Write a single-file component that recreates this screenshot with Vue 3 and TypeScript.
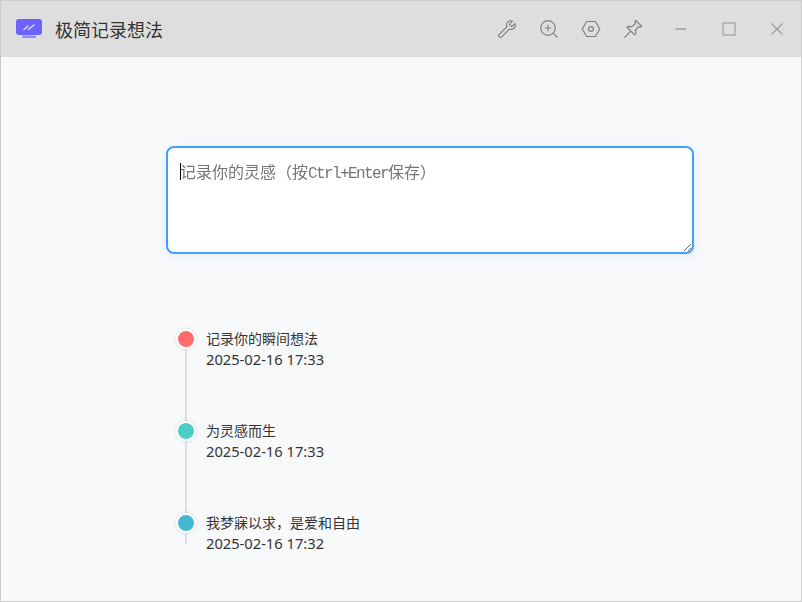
<script setup lang="ts">
import { onMounted, ref } from 'vue'

interface Note {
  text: string
  time: string
  color: string
}

const notes: Note[] = [
  { text: '记录你的瞬间想法', time: '2025-02-16 17:33', color: '#ff6b6b' },
  { text: '为灵感而生', time: '2025-02-16 17:33', color: '#4ecdc4' },
  { text: '我梦寐以求\uFF0C是爱和自由', time: '2025-02-16 17:32', color: '#45b7d1' },
]

const input = ref<HTMLTextAreaElement | null>(null)
onMounted(() => input.value?.focus())
</script>

<template>
  <div class="window">
    <header class="titlebar">
      <div class="brand">
        <svg class="logo" width="28" height="22" viewBox="0 0 28 22">
          <rect x="1" y="1" width="26" height="16" rx="3" fill="#6c63ff" />
          <rect x="7" y="17.500" width="14" height="2.500" rx="1" fill="#8f88ff" />
          <path d="M9 11.500 13 8M13.500 11.500 19 7" stroke="#e4e2ff" stroke-width="1.300" fill="none" stroke-linecap="round" />
        </svg>
        <span class="title">极简记录想法</span>
      </div>
      <div class="tools">
        <svg class="icon" viewBox="0 0 20 20">
          <path d="M18 4.600 14.800 7.600 12.400 5.200 15.400 2.100C12.900 1.100 10.100 2.500 9.600 5C9.400 6 9.500 6.900 9.900 7.700L2.300 15.300C1.500 16.100 1.500 17.200 2.200 17.900 2.900 18.600 4 18.500 4.700 17.800L12.300 10.200C13.200 10.500 14.100 10.600 15 10.400 17.500 9.800 18.900 7.100 18 4.600Z" />
        </svg>
        <svg class="icon" viewBox="0 0 20 20">
          <circle cx="9" cy="9" r="7.300" />
          <path d="M9 5.800V12.200M5.800 9H12.200M14.300 14.300 18.500 18.500" />
        </svg>
        <svg class="icon" viewBox="0 0 20 20">
          <path d="M5.600 2.500H14.400L18.800 10 14.400 17.500H5.600L1.200 10Z" />
          <circle cx="10" cy="10" r="2.400" />
        </svg>
        <svg class="icon" viewBox="0 0 20 20">
          <path d="M12.800 1.500 18.500 7.200 17.300 8 15.500 7.600 12.400 11.300 12.700 15 11.500 15.800 4.200 8.500 5 7.300 8.700 7.600 12.400 4.500 12 2.700ZM7.800 12.200 1.500 18.500" />
        </svg>
      </div>
      <div class="controls">
        <svg class="ctl" viewBox="0 0 14 14"><path d="M1.500 7H12" stroke-width="1.400" /></svg>
        <svg class="ctl" viewBox="0 0 14 14"><rect x="1" y="1" width="12" height="12" /></svg>
        <svg class="ctl" viewBox="0 0 14 14"><path d="M1.500 1.500 12.500 12.500M12.500 1.500 1.500 12.500" /></svg>
      </div>
    </header>

    <main class="content">
      <div class="input-wrap">
        <textarea ref="input" class="note-input" aria-label="记录你的灵感"></textarea>
        <div class="hint"><i class="caret"></i>记录你的灵感&#xFF08;按<span class="latin">Ctrl+Enter</span>保存&#xFF09;</div>
      </div>
      <ul class="timeline">
        <li v-for="(note, i) in notes" :key="i" class="item">
          <span class="dot" :style="{ background: note.color }"></span>
          <div class="text">
            <div class="line1">{{ note.text }}</div>
            <div class="line2">{{ note.time }}</div>
          </div>
        </li>
      </ul>
    </main>
  </div>
</template>

<style>
html, body { margin: 0; padding: 0; }
</style>

<style scoped>
.window {
  width: 802px;
  height: 602px;
  box-sizing: border-box;
  border: 1px solid #ccc;
  background: #f8f9fb;
  display: flex;
  flex-direction: column;
  overflow: hidden;
  font-family: "Noto Sans CJK SC", sans-serif;
}
.titlebar {
  height: 56px;
  flex: none;
  background: #dedede;
  display: flex;
  align-items: center;
  padding: 0 17px 0 14px;
}
.brand {
  display: flex;
  align-items: center;
  gap: 12px;
  flex: 1;
}
.logo { display: block; }
.title {
  font-size: 18px;
  color: #333;
}
.tools {
  display: flex;
  gap: 22px;
  margin-right: 31px;
}
.icon {
  width: 20px;
  height: 20px;
  fill: none;
  stroke: #808080;
  stroke-width: 1.200;
}
.controls {
  display: flex;
  gap: 34px;
  align-items: center;
}
.ctl {
  width: 14px;
  height: 14px;
  fill: none;
  stroke: #9a9a9a;
  stroke-width: 1.100;
}
.content {
  flex: 1;
  padding: 89px 107px 0 165px;
}
.input-wrap { position: relative; }
.note-input {
  display: block;
  width: 100%;
  height: 108px;
  box-sizing: border-box;
  border: 2px solid #409eff;
  border-radius: 8px;
  padding: 12px;
  outline: none;
  resize: vertical;
  background: #fff;
  caret-color: transparent;
  box-shadow: 0 2px 12px rgba(64, 158, 255, 0.12);
}
.hint {
  position: absolute;
  left: 14px;
  top: 13px;
  font-size: 16px;
  line-height: 24px;
  color: #757575;
  pointer-events: none;
  white-space: nowrap;
}
.latin {
  font-family: "Liberation Mono", monospace;
  letter-spacing: -1.600px;
}
.caret {
  position: absolute;
  left: 0;
  top: 4px;
  width: 1px;
  height: 17px;
  background: #000;
}
.timeline {
  list-style: none;
  margin: 76px 0 0;
  padding: 0 0 0 20px;
}
.item {
  position: relative;
  height: 92px;
  display: flex;
  gap: 10px;
}
.item::before {
  content: "";
  position: absolute;
  left: -1px;
  top: 8px;
  width: 2px;
  height: 92px;
  background: #dcdfe3;
}
.item:last-child::before { height: 22px; }
.dot {
  position: absolute;
  left: -10px;
  top: -1px;
  width: 16px;
  height: 16px;
  border: 2px solid #fff;
  border-radius: 50%;
  box-shadow: 0 0 4px rgba(0, 0, 0, 0.12);
}
.text {
  margin-left: 20px;
  color: #333;
}
.line1 {
  font-size: 14px;
  line-height: 19px;
  margin-top: -1px;
}
.line2 {
  font-family: "Noto Sans", "Noto Sans CJK SC", sans-serif;
  font-size: 14.700px;
  line-height: 22px;
}
</style>
